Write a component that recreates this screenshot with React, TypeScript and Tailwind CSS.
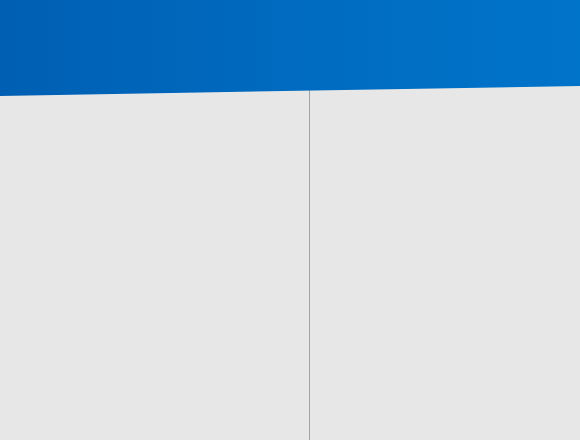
export default function App() {
  return (
    <div className="flex h-[440px] w-[580px] flex-col overflow-hidden bg-[#e7e7e7]">
      {/* header band, bottom edge tilts slightly up to the right */}
      <div className="h-[96px] shrink-0 bg-gradient-to-r from-[#005fb2] via-[#006bc0] to-[#0074c9] [clip-path:polygon(0_0,100%_0,100%_86px,0_96px)]" />
      <div className="-mt-[6px] flex flex-1">
        <div className="w-[310px] border-r border-[#a3a3a3]" />
        <div className="flex-1" />
      </div>
    </div>
  );
}
